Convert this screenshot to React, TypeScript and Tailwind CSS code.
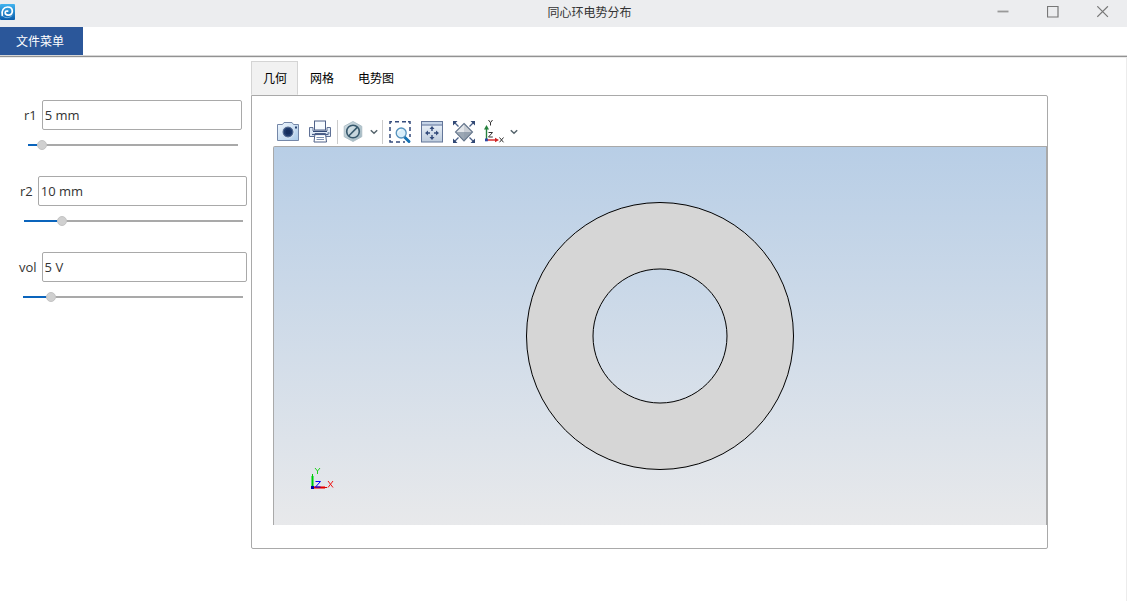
import { useState } from "react";
import type { ReactNode } from "react";

function AppLogo() {
  return (
    <svg className="h-4 w-[15px]" viewBox="0 0 15 16" aria-hidden="true">
      <defs>
        <linearGradient id="logo" x1="0" y1="0" x2="0" y2="1">
          <stop offset="0" stopColor="#41b4f0" />
          <stop offset="1" stopColor="#0a5cab" />
        </linearGradient>
      </defs>
      <rect width="15" height="16" rx="1" fill="url(#logo)" />
      <path d="M2.300 11.500C1.200 6.600 3.600 3 7.600 3c3 0 4.700 1.800 4.700 4.200 0 2.400-1.900 3.900-4.200 3.900-1.700 0-2.900-1-2.900-2.300 0-1.400 1.200-2.100 2.500-1.700" fill="none" stroke="#fff" strokeWidth="1.700" strokeLinecap="round" />
      <path d="M2.800 11.800c2 2.600 7 2.600 9.700-.8" fill="none" stroke="#8cc4ee" strokeWidth=".8" />
    </svg>
  );
}

function CameraIcon() {
  return (
    <svg className="h-6 w-6" viewBox="0 0 24 24" aria-hidden="true">
      <defs>
        <linearGradient id="cam" x1="0" y1="0" x2="1" y2="1">
          <stop offset="0" stopColor="#f3f9ff" />
          <stop offset="1" stopColor="#a9c9e8" />
        </linearGradient>
      </defs>
      <path d="M1.500 4.500h5l1.500-2h8l1.500 2h5v16h-21z" fill="url(#cam)" stroke="#7487a8" />
      <circle cx="12" cy="12" r="6" fill="#8fa5c2" stroke="#e4eefa" strokeWidth=".8" />
      <circle cx="12" cy="12" r="4.800" fill="#1f3a6d" stroke="#4f688f" strokeWidth="1" />
      <circle cx="12" cy="12" r="2.500" fill="#142c5c" />
      <rect x="19" y="6.500" width="2" height="2" fill="#2d4471" />
    </svg>
  );
}

function PrinterIcon() {
  return (
    <svg className="h-6 w-6" viewBox="0 0 24 24" aria-hidden="true">
      <rect x="6.500" y="1" width="11" height="9" fill="#f7fbff" stroke="#4f6188" />
      <path d="M1.500 7.500h3.500v3.500h14V7.500h3.500v9h-21z" fill="#e1ebf7" stroke="#5f7196" />
      <path d="M5 11.500h14" stroke="#314875" />
      <path d="M19.500 13h2" stroke="#314875" />
      <path d="M7 13.500h10.500l1 8.500H6z" fill="#fff" stroke="#4f6188" />
      <path d="M4 14.500h16.500" stroke="#4a5f8a" strokeWidth="1.200" />
      <path d="M8.500 17.500h7.500M8.500 19.500h7.500" stroke="#7b90b3" />
    </svg>
  );
}

function HexIcon() {
  return (
    <svg className="h-6 w-6" viewBox="0 0 24 24" aria-hidden="true">
      <defs>
        <linearGradient id="hex" x1="0" y1="0" x2="1" y2="1">
          <stop offset="0" stopColor="#d3dee4" />
          <stop offset="1" stopColor="#9db5bf" />
        </linearGradient>
      </defs>
      <path d="M11 1.500l8.800 4.800v10.400L11 21.500l-8.800-4.800V6.300z" fill="url(#hex)" stroke="#aabcc4" strokeWidth=".9" />
      <circle cx="11" cy="11.500" r="6.300" fill="#d5e2e8" fillOpacity=".6" stroke="#36586c" strokeWidth="1.600" />
      <path d="M6.700 16l8.700-8.900" stroke="#36586c" strokeWidth="1.600" />
    </svg>
  );
}

function ZoomBoxIcon() {
  return (
    <svg className="h-6 w-6" viewBox="0 0 24 24" aria-hidden="true">
      <path d="M2 4V1.800h2M7 1.800h4M14 1.800h4M20 1.800h2V4M22 7v4M22 14v3M2 7v4M2 14v4M2 20v2h3M8 22h4M15 22h2" fill="none" stroke="#354b7c" strokeWidth="1.500" />
      <path d="M16.500 17l4.500 4.500" stroke="#1673b5" strokeWidth="3" strokeLinecap="round" />
      <circle cx="13.200" cy="13" r="5" fill="#d9effb" stroke="#5793be" strokeWidth="1.300" />
      <path d="M10 12.500c.3-1.500 1.500-2.600 3-2.600" fill="none" stroke="#fff" />
    </svg>
  );
}

function PanBoxIcon() {
  return (
    <svg className="h-6 w-6" viewBox="0 0 24 24" aria-hidden="true">
      <defs>
        <linearGradient id="pan" x1="0" y1="0" x2="0" y2="1">
          <stop offset="0" stopColor="#f0f6fc" />
          <stop offset="1" stopColor="#bdcbdc" />
        </linearGradient>
      </defs>
      <rect x="1.500" y="1.500" width="21" height="20.500" fill="url(#pan)" stroke="#637699" />
      <path d="M2 2h20v2.500H2z" fill="#c5d4e7" />
      <path d="M2 5h20" stroke="#536993" />
      <path d="M12 6l2.500 3h-5zM12 20l2.500-3h-5zM5 13l3-2.500v5zM19 13l-3-2.500v5z" fill="#344c7c" />
      <path d="M12 8.500v2.500M12 15v3M7.500 13h2.500M14 13h3" stroke="#344c7c" strokeWidth="1.400" />
    </svg>
  );
}

function ExtentsIcon() {
  return (
    <svg className="h-6 w-6" viewBox="0 0 24 24" aria-hidden="true">
      <path d="M12 3.500l8.500 8.500H3.500z" fill="#e3e6ea" />
      <path d="M3.500 12h17L12 21z" fill="#9ba7b4" />
      <path d="M12 3.500v17.500l8.500-9z" fill="#7f8c9b" fillOpacity=".25" />
      <path d="M12 3.500l8.500 8.600L12 21l-8.500-8.900z" fill="none" stroke="#64758b" strokeWidth="1.100" />
      <path d="M6.500 6.500l-4-4M17.500 6.500l4-4M6.500 17.500l-4 4M17.500 17.500l4 4" stroke="#4a6088" strokeWidth="1.300" />
      <path d="M1 1h4.500L1 5.500zM23 1h-4.500L23 5.500zM1 23h4.500L1 18.500zM23 23h-4.500L23 18.500z" fill="#304774" />
    </svg>
  );
}

function AxesIcon() {
  return (
    <svg className="h-6 w-6" viewBox="0 0 24 24" aria-hidden="true">
      <path d="M4.500 20V8" stroke="#25813d" strokeWidth="1.400" />
      <path d="M4.500 5L7 9.500H2z" fill="#25813d" />
      <path d="M4 20h10" stroke="#d83131" strokeWidth="1.500" />
      <path d="M17 20l-4-2.300v4.600z" fill="#d02424" />
      <rect x="3" y="18.500" width="2.800" height="2.800" fill="#2947a6" />
      <g fill="none" stroke="#333" strokeWidth="1">
        <path d="M6.500 0l2 2.700L10.500 0M8.500 2.700v2.800M6.500 12.500h4l-4 4.500h4.300M17.500 17.500l4 4.800M21.500 17.500l-4 4.800" />
      </g>
    </svg>
  );
}

function Chevron() {
  return (
    <svg className="h-2 w-2" viewBox="0 0 8 8" aria-hidden="true">
      <path d="M.8 2.200L4 5.300l3.200-3.100" fill="none" stroke="#56646c" strokeWidth="1.500" />
    </svg>
  );
}

function ToolButton({ label, children }: { label: string; children: ReactNode }) {
  return (
    <button type="button" aria-label={label} className="flex items-center hover:bg-sky-50">
      {children}
    </button>
  );
}

type ParamProps = {
  name: string;
  initial: string;
  start: number;
  className: string;
};

function Param({ name, initial, start, className }: ParamProps) {
  const [text, setText] = useState(initial);
  const [value, setValue] = useState(start);
  return (
    <div className={className}>
      <div className="flex items-center gap-[5px]">
        <label htmlFor={name} className="shrink-0">
          {name}
        </label>
        <input
          id={name}
          value={text}
          onChange={(e) => setText(e.target.value)}
          className="h-[30px] min-w-0 flex-1 rounded-[2px] border border-[#a9a9a9] bg-white px-0.5 outline-none focus:border-[#0a64bc]"
        />
      </div>
      <input
        type="range"
        aria-label={`${name} slider`}
        min={0}
        max={1000}
        value={value}
        onChange={(e) => setValue(Number(e.target.value))}
        style={{ backgroundSize: `${value / 10}% 2px, 100% 2px` }}
        className="mt-2.5 mr-1 ml-1 block h-2.5 w-[calc(100%-8px)] appearance-none bg-[linear-gradient(#0a64bc,#0a64bc),linear-gradient(#a9a9a9,#a9a9a9)] bg-left bg-no-repeat [&::-webkit-slider-thumb]:size-2.5 [&::-webkit-slider-thumb]:appearance-none [&::-webkit-slider-thumb]:rounded-full [&::-webkit-slider-thumb]:border [&::-webkit-slider-thumb]:border-[#c4c4c4] [&::-webkit-slider-thumb]:bg-[#d0d0d0]"
      />
    </div>
  );
}

function Triad() {
  return (
    <svg className="absolute bottom-[34px] left-[34px] h-6 w-7" viewBox="0 0 28 24" aria-hidden="true">
      <path d="M4.500 20V9" stroke="#5fe07a" strokeWidth="3" />
      <path d="M4.500 20V7" stroke="#00c800" />
      <path d="M5 20.500h12" stroke="#e86a6a" strokeWidth="3" />
      <path d="M5 20.500h14" stroke="#e00000" />
      <rect x="3" y="19" width="3" height="3" fill="#0000a8" />
      <g fill="none" strokeWidth="1">
        <path d="M7 1l2.500 3L12 1M9.500 4v3" stroke="#20d020" />
        <path d="M7.500 14.500h5l-5 5.500h5" stroke="#0000ff" />
        <path d="M20 14l5 6.500M25 14l-5 6.500" stroke="#f01515" />
      </g>
    </svg>
  );
}

const tabs = ["几何", "网格", "电势图"];

export default function App() {
  const [active, setActive] = useState(0);
  return (
    <div className="flex min-h-screen flex-col bg-white font-['Open_Sans','Noto_Sans_CJK_SC',sans-serif] text-[13px] leading-4 text-[#333]">
      <header className="grid h-[27px] grid-cols-[1fr_auto_1fr] items-center bg-[#ecedef] pb-1">
        <AppLogo />
        <h1 className="pl-[52px] font-['Noto_Sans_CJK_SC',sans-serif] text-xs font-normal">同心环电势分布</h1>
        <div className="flex justify-end gap-[38px] pr-[18px] text-[#777]">
          <button type="button" aria-label="最小化">
            <svg className="size-3" viewBox="0 0 12 12"><path d="M.5 5.500h11" stroke="#999" strokeWidth="1.800" /></svg>
          </button>
          <button type="button" aria-label="最大化">
            <svg className="size-3" viewBox="0 0 12 12"><path d="M.5.500h10.500v10.500H.5z" fill="none" stroke="currentColor" strokeWidth="1.200" /></svg>
          </button>
          <button type="button" aria-label="关闭">
            <svg className="size-3" viewBox="0 0 12 12"><path d="M.3.3l10.600 10.600M10.900.3L.3 10.900" stroke="currentColor" strokeWidth="1.200" /></svg>
          </button>
        </div>
      </header>

      <nav className="flex h-7">
        <button type="button" className="bg-[#2b579a] pr-[19px] pl-4 font-['Noto_Sans_CJK_SC',sans-serif] text-xs text-white">
          文件菜单
        </button>
      </nav>
      <div className="h-[3px] border-t border-b border-t-[#d6d6d6] border-b-[#ececec] bg-[#929292]" />

      <main className="flex flex-1 border-r border-[#ececec]">
        <aside className="flex w-[251px] shrink-0 flex-col gap-[26px] pt-[42px]">
          <Param name="r1" initial="5 mm" start={45} className="pr-[9px] pl-6" />
          <Param name="r2" initial="10 mm" start={158} className="pr-1 pl-5" />
          <Param name="vol" initial="5 V" start={110} className="pr-1 pl-[19px]" />
        </aside>

        <section className="mr-[78px] mb-[52px] flex min-w-0 flex-1 flex-col pt-[3px]">
          <div role="tablist" className="flex h-[34px] font-['Noto_Sans_CJK_SC',sans-serif] text-xs text-black">
            {tabs.map((tab, i) => (
              <button
                key={tab}
                type="button"
                role="tab"
                aria-selected={i === active}
                onClick={() => setActive(i)}
                className={
                  i === active
                    ? "border border-[#d4d4d4] border-b-[#f1f1f1] bg-[#f1f1f1] pr-[10px] pl-[11px]"
                    : "px-3"
                }
              >
                {tab}
              </button>
            ))}
          </div>

          <div className="flex flex-1 flex-col rounded-b-[2px] rounded-tr-[2px] border border-[#a9a9a9] pb-[23px] pl-[21px]">
            <div className="flex h-[50px] items-end pb-0.5 pl-[3px]">
              <div className="flex items-center gap-2">
                <ToolButton label="快照"><CameraIcon /></ToolButton>
                <ToolButton label="打印"><PrinterIcon /></ToolButton>
              </div>
              <div className="ml-[5px] flex h-6 items-center gap-1 border-l border-[#ccc] pr-1 pl-1">
                <ToolButton label="渲染"><HexIcon /></ToolButton>
                <ToolButton label="渲染选项"><Chevron /></ToolButton>
              </div>
              <div className="flex h-6 items-center gap-2 border-l border-[#ccc] pl-[5px]">
                <ToolButton label="缩放框"><ZoomBoxIcon /></ToolButton>
                <ToolButton label="平移"><PanBoxIcon /></ToolButton>
                <ToolButton label="缩放到窗口"><ExtentsIcon /></ToolButton>
              </div>
              <div className="ml-[6px] flex h-6 items-center gap-1">
                <ToolButton label="视图"><AxesIcon /></ToolButton>
                <ToolButton label="视图选项"><Chevron /></ToolButton>
              </div>
            </div>

            <div className="relative flex flex-1 items-center justify-center rounded-tl-[2px] border border-b-0 border-[#a9a9a9] bg-linear-to-b from-[#b8cee6] to-[#e8e9eb]">
              <svg className="size-[270px]" viewBox="0 0 270 270" role="img" aria-label="同心环">
                <path
                  d="M1.500 135a133.500 133.500 0 1 0 267 0a133.500 133.500 0 1 0-267 0zM68 135a67 67 0 1 0 134 0a67 67 0 1 0-134 0z"
                  fill="#d6d6d6"
                  fillRule="evenodd"
                  stroke="#000"
                  strokeWidth="1"
                />
              </svg>
              <Triad />
            </div>
          </div>
        </section>
      </main>
    </div>
  );
}
